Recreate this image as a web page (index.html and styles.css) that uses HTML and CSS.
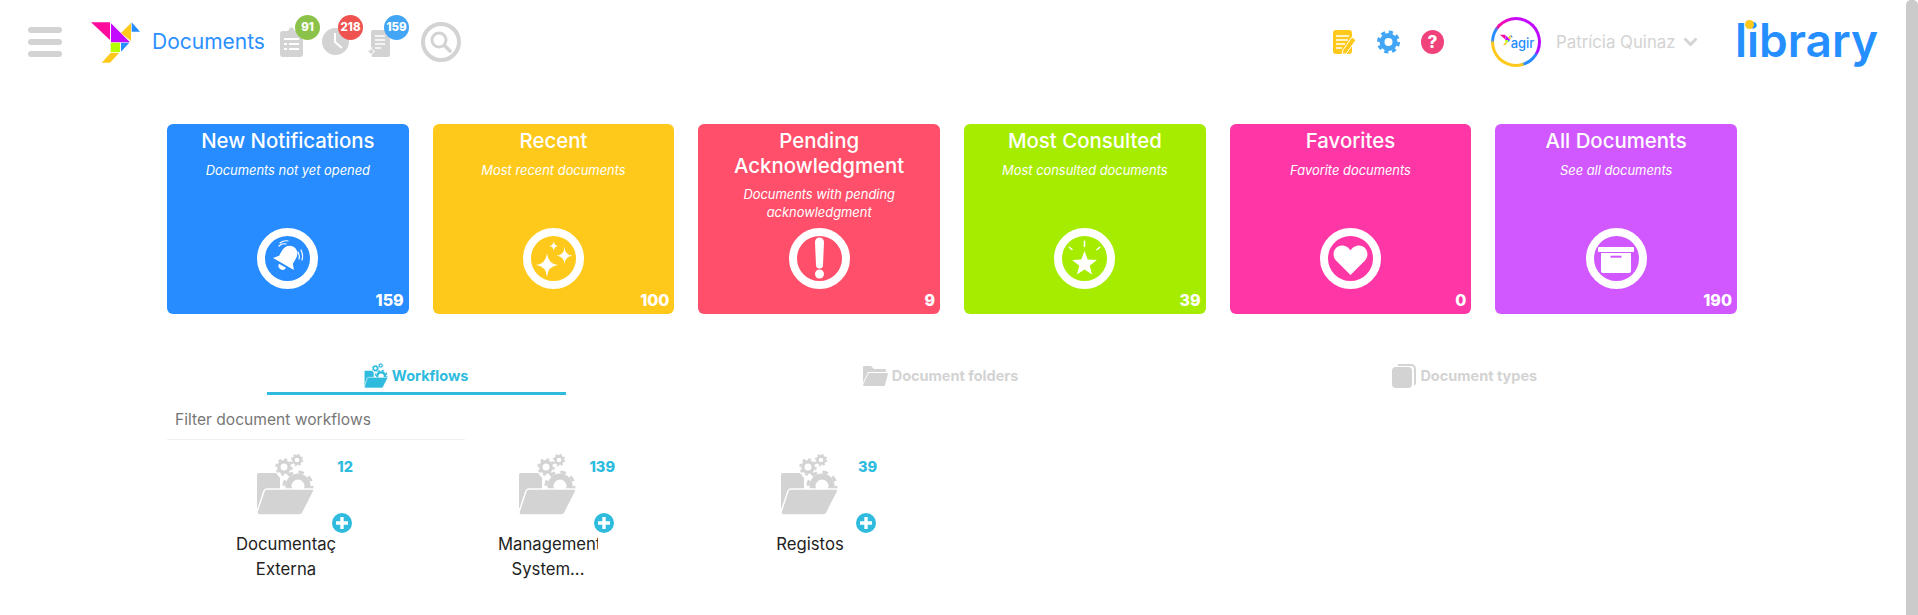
FILE: index.html
```html
<!DOCTYPE html>
<html lang="en">

<head>
    <title>Documents</title>

    <link rel="stylesheet" href="styles.css">
</head>

<body>
    <svg class="sprites">
        <symbol id="bird" viewBox="0 0 49 41">
            <polygon fill="#ff0a9c" points="0,0.3 19,0.3 19,18" />
            <polygon fill="#c30aff" points="20,1.3 20,20.3 39,20.3" />
            <polygon fill="#ffc91c" points="40,1 40,19 30,11" />
            <polygon fill="#268cff" points="40.7,0.3 49,9.7 40.7,9.7" />
            <rect fill="#b4ff00" x="19.7" y="20.7" width="9.3" height="9.3" />
            <polygon fill="#268cff" points="30,20.7 38.3,20.7 30,29.7" />
            <polygon fill="#ffc91c" points="19.7,30.7 28.3,30.7 19,40.7 10.7,40.7" />
        </symbol>
        <symbol id="gear-folder" viewBox="0 0 57 61">
            <path d="M2 19h17l4 5v30H0V21a2 2 0 0 1 2-2z" />
            <circle cx="41" cy="32" r="9.5" fill="none" stroke="currentColor" stroke-width="6" />
            <circle cx="41" cy="32" r="14" fill="none" stroke="currentColor" stroke-width="3" stroke-dasharray="5.5 5.5" />
            <circle cx="27" cy="13" r="5.2" fill="none" stroke="currentColor" stroke-width="3.4" />
            <circle cx="27" cy="13" r="7.7" fill="none" stroke="currentColor" stroke-width="2" stroke-dasharray="3 3.05" />
            <circle cx="40" cy="6" r="3.6" fill="none" stroke="currentColor" stroke-width="2.6" />
            <circle cx="40" cy="6" r="5.4" fill="none" stroke="currentColor" stroke-width="1.6" stroke-dasharray="2.1 2.14" />
            <path d="M10 35h45c1.500 0 2.200 1 1.700 2.300L46 58.500c-.7 1.500-1.500 2.500-3.500 2.500H3c-2 0-3.300-1-3-3l7-21c.5-1.500 1.500-2 3-2z" stroke="#fff" stroke-width="1.500" />
        </symbol>
    </svg>

    <div class="app">
        <div class="page">
            <header class="topbar">
                <div class="burger"><span></span><span></span><span></span></div>
                <svg class="logo"><use href="#bird" /></svg>
                <p class="app-name">Documents</p>

                <div class="counter counter-tasks">
                    <svg width="23" height="30" viewBox="0 0 23 30">
                        <path fill="#d3d3d3" d="M3 4h5l2-3a2 2 0 0 1 3 0l2 3h5a3 3 0 0 1 3 3v20a3 3 0 0 1-3 3H3a3 3 0 0 1-3-3V7a3 3 0 0 1 3-3z" />
                        <path stroke="#fff" stroke-width="2" d="M4 12h15M4 17h3M9 17h10M4 22h3M9 22h10" />
                    </svg>
                    <span class="badge badge-green">91</span>
                </div>
                <div class="counter counter-recent">
                    <svg width="27" height="27" viewBox="0 0 27 27">
                        <circle cx="13.500" cy="13.500" r="13.500" fill="#d3d3d3" />
                        <path stroke="#fff" stroke-width="2" fill="none" d="M13 5v9l7 6" />
                    </svg>
                    <span class="badge badge-red">218</span>
                </div>
                <div class="counter counter-docs">
                    <svg width="23" height="27" viewBox="0 0 23 27">
                        <path fill="#d3d3d3" d="M6 0h15a2 2 0 0 1 2 2v23a2 2 0 0 1-2 2H6a2 2 0 0 1-2-2V2a2 2 0 0 1 2-2z" />
                        <path stroke="#fff" stroke-width="1.500" d="M8 6h10M8 10h10M8 14h10M8 18h6" />
                        <path fill="#d3d3d3" stroke="#fff" d="M4 17q.5 4 4 4.500q-3.500 .5-4 4.500q-.5-4-4-4.500q3.500-.5 4-4.500z" />
                    </svg>
                    <span class="badge badge-blue">159</span>
                </div>
                <div class="search">
                    <svg width="22" height="22" viewBox="0 0 22 22" fill="none" stroke="#d3d3d3">
                        <circle cx="9" cy="9" r="7" stroke-width="3" />
                        <path stroke-width="3.500" stroke-linecap="round" d="M14.500 14.500L20 20" />
                    </svg>
                </div>

                <div class="topbar-right">
                    <svg class="tool" width="23" height="24" viewBox="0 0 23 24">
                        <rect width="19" height="24" rx="3" fill="#ffc91c" />
                        <path stroke="#fff" stroke-width="1.500" d="M3 6h13M3 10h12M3 14h9M3 18h6" />
                        <path fill="#ffc91c" stroke="#fff" d="M19 7l4 3L13 24l-4 0 1-4z" />
                    </svg>
                    <svg class="tool" width="23" height="24" viewBox="0 0 23 24">
                        <circle cx="11.500" cy="12" r="6.500" fill="none" stroke="#42a5f5" stroke-width="5" />
                        <circle cx="11.500" cy="12" r="10" fill="none" stroke="#42a5f5" stroke-width="3" stroke-dasharray="4.200 3.650" />
                    </svg>
                    <span class="tool help">?</span>

                    <div class="avatar">
                        <div class="avatar-inner">
                            <svg class="avatar-bird"><use href="#bird" /></svg>
                            <span>agir</span>
                        </div>
                    </div>
                    <p class="user-name">Patrícia Quinaz</p>
                    <svg class="chevron" width="15" height="10" viewBox="0 0 15 10">
                        <path d="M1.500 1.500L7.500 7.500L13.500 1.500" fill="none" stroke="#d3d3d3" stroke-width="2.800" />
                    </svg>
                    <div class="brand">library<i class="brand-dot"></i></div>
                </div>
            </header>

            <main>
                <section class="cards">
                    <a class="card card-blue">
                        <h2>New Notifications</h2>
                        <p>Documents not yet opened</p>
                        <div class="ring">
                            <svg viewBox="0 0 45 45" width="45" height="45">
                                <g transform="rotate(30 22 22)" fill="#fff">
                                    <path d="M22 9c-5 0-8 4-8 9v6l-4 5h24l-4-5v-6c0-5-3-9-8-9z" />
                                    <path d="M18 31a4 4 0 0 0 8 0z" />
                                </g>
                                <path fill="none" stroke="#fff" stroke-width="1.200" stroke-linecap="round" d="M14 10q3-3 7-2M15 7q4-3 8-2M33 16q2 4 1 7M36 14q2.500 5 1 10" />
                            </svg>
                        </div>
                        <div class="card-count">159</div>
                    </a>
                    <a class="card card-yellow">
                        <h2>Recent</h2>
                        <p>Most recent documents</p>
                        <div class="ring">
                            <svg viewBox="0 0 45 45" width="45" height="45" fill="#fff">
                                <path d="M16 17Q17 28 27 29Q17 30 16 41Q15 30 5 29Q15 28 16 17z" />
                                <path d="M33.500 11Q34 19 41.500 19.700Q34 20.500 33.500 28Q33 20.500 25.500 19.700Q33 19 33.500 11z" />
                                <path d="M22.700 5Q23 9.500 27.200 10Q23 10.500 22.700 15Q22.400 10.500 18.200 10Q22.400 9.500 22.700 5z" />
                            </svg>
                        </div>
                        <div class="card-count">100</div>
                    </a>
                    <a class="card card-red">
                        <h2>Pending Acknowledgment</h2>
                        <p>Documents with pending acknowledgment</p>
                        <div class="ring">
                            <svg viewBox="0 0 45 45" width="45" height="45" fill="#fff">
                                <path d="M18 6a4.500 4.500 0 0 1 9 0l-1 23a3.500 3.500 0 0 1-7 0z" />
                                <circle cx="22.500" cy="38" r="4.500" />
                            </svg>
                        </div>
                        <div class="card-count">9</div>
                    </a>
                    <a class="card card-green">
                        <h2>Most Consulted</h2>
                        <p>Most consulted documents</p>
                        <div class="ring">
                            <svg viewBox="0 0 45 45" width="45" height="45" fill="#fff">
                                <polygon points="22.500,15 25.700,23.550 34.900,24 27.700,29.700 30.100,38.500 22.500,33.500 14.900,38.500 17.300,29.700 10.100,24 19.300,23.550" />
                                <path stroke="#fff" stroke-width="1.500" d="M22.500 4.500v6.500M10.500 14l-3.500-3M34.500 14l3.500-3" />
                            </svg>
                        </div>
                        <div class="card-count">39</div>
                    </a>
                    <a class="card card-pink">
                        <h2>Favorites</h2>
                        <p>Favorite documents</p>
                        <div class="ring">
                            <svg viewBox="0 0 45 45" width="45" height="45" fill="#fff">
                                <path d="M22.500 39L8 24.500C2.500 18 7 9.500 14 9.500C18 9.500 21 12 22.500 14.500C24 12 27 9.500 31 9.500C38 9.500 42.500 18 37 24.500z" />
                            </svg>
                        </div>
                        <div class="card-count">0</div>
                    </a>
                    <a class="card card-purple">
                        <h2>All Documents</h2>
                        <p>See all documents</p>
                        <div class="ring">
                            <svg viewBox="0 0 45 45" width="45" height="45" fill="#fff">
                                <rect x="4" y="11" width="36" height="5" rx="1" />
                                <path d="M7 17h30v18a2 2 0 0 1-2 2H9a2 2 0 0 1-2-2z" />
                                <rect x="16.500" y="19.700" width="11" height="2" fill="#d157ff" />
                            </svg>
                        </div>
                        <div class="card-count">190</div>
                    </a>
                </section>

                <nav class="tabs">
                    <div class="tab active">
                        <a class="tab-link">
                            <svg class="tab-icon" width="24" height="25" viewBox="0 0 57 61"><use href="#gear-folder" /></svg>
                            Workflows
                        </a>
                    </div>
                    <div class="tab">
                        <a class="tab-link">
                            <svg class="tab-icon" width="25" height="20" viewBox="0 0 25 20">
                                <path d="M1 0h7l3 3h11a1 1 0 0 1 1 1v2H5L0 17V1a1 1 0 0 1 1-1z" />
                                <path d="M6 7h18a1 1 0 0 1 1 1l-3 11a1 1 0 0 1-1 1H1a1 1 0 0 1-1-1l5-11a1 1 0 0 1 1-1z" />
                            </svg>
                            Document folders
                        </a>
                    </div>
                    <div class="tab">
                        <a class="tab-link">
                            <svg class="tab-icon" width="24" height="24" viewBox="0 0 24 24">
                                <rect y="3" width="20" height="21" rx="4" />
                                <path d="M6 0h13a5 5 0 0 1 5 5v14a4 4 0 0 1-2 3V5a3 3 0 0 0-3-3H6z" />
                            </svg>
                            Document types
                        </a>
                    </div>
                </nav>

                <input class="filter" type="text" placeholder="Filter document workflows">

                <section class="workflows">
                    <div class="workflow">
                        <div class="workflow-box">
                            <svg class="folder"><use href="#gear-folder" /></svg>
                            <span class="workflow-count">12</span>
                            <svg class="plus" width="20" height="20" viewBox="0 0 20 20">
                                <circle cx="10" cy="10" r="10" fill="#2ebbde" />
                                <path stroke="#fff" stroke-width="3.400" d="M10 4v12M4 10h12" />
                            </svg>
                            <p class="workflow-name">Documentação Externa</p>
                        </div>
                    </div>
                    <div class="workflow">
                        <div class="workflow-box">
                            <svg class="folder"><use href="#gear-folder" /></svg>
                            <span class="workflow-count">139</span>
                            <svg class="plus" width="20" height="20" viewBox="0 0 20 20">
                                <circle cx="10" cy="10" r="10" fill="#2ebbde" />
                                <path stroke="#fff" stroke-width="3.400" d="M10 4v12M4 10h12" />
                            </svg>
                            <p class="workflow-name">Management System...</p>
                        </div>
                    </div>
                    <div class="workflow">
                        <div class="workflow-box">
                            <svg class="folder"><use href="#gear-folder" /></svg>
                            <span class="workflow-count">39</span>
                            <svg class="plus" width="20" height="20" viewBox="0 0 20 20">
                                <circle cx="10" cy="10" r="10" fill="#2ebbde" />
                                <path stroke="#fff" stroke-width="3.400" d="M10 4v12M4 10h12" />
                            </svg>
                            <p class="workflow-name">Registos</p>
                        </div>
                    </div>
                </section>
            </main>
        </div>
        <div class="scrollbar"></div>
    </div>
</body>

</html>
```

FILE: styles.css
```css
* {
    padding: 0;
    margin: 0;
    box-sizing: border-box;
    font-family: Inter, "Open Sans", Arial, sans-serif;
}

body {
    overflow: hidden;
    background-color: #fff;
}

.sprites {
    display: none;
}

.app {
    display: flex;
    height: 100vh;
}

.page {
    flex: 1;
    min-width: 0;
}

.scrollbar {
    width: 12px;
    background-color: #cbcbcb;
    border-radius: 5px 5px 0 0;
}

/* top bar */

.topbar {
    display: flex;
    align-items: center;
    height: 84px;
    padding: 0 27px 0 28px;
}

.burger {
    display: flex;
    flex-direction: column;
    gap: 6px;
    width: 34px;
    margin-right: 29px;
}

.burger span {
    height: 6px;
    background-color: #d3d3d3;
    border-radius: 3px;
}

.logo {
    width: 49px;
    height: 41px;
}

.app-name {
    width: 128px;
    margin-left: 12px;
    margin-bottom: 2px;
    font-size: 21px;
    color: #2b8fff;
}

.counter {
    position: relative;
    display: flex;
    height: 30px;
}

.counter-tasks {
    width: 42px;
}

.counter-recent {
    width: 45px;
    padding-top: 1px;
}

.counter-docs {
    width: 54px;
    padding-top: 3px;
}

.badge {
    position: absolute;
    top: -12px;
    width: 25px;
    height: 25px;
    border-radius: 50%;
    color: #fff;
    font-size: 11.500px;
    font-weight: 800;
    line-height: 25px;
    text-align: center;
}

.badge-green {
    left: 15px;
    background-color: #8bc34a;
}

.badge-red {
    left: 16px;
    background-color: #ef5350;
}

.badge-blue {
    left: 17px;
    background-color: #42a5f5;
}

.search {
    display: flex;
    align-items: center;
    justify-content: center;
    width: 40px;
    height: 40px;
    border: 4px solid #d3d3d3;
    border-radius: 50%;
}

.topbar-right {
    display: flex;
    align-items: center;
    margin-left: auto;
}

.tool {
    margin-right: 21px;
}

.help {
    display: block;
    width: 23px;
    height: 24px;
    margin-right: 47px;
    border-radius: 50%;
    background-color: #f0437c;
    color: #fff;
    font-size: 17px;
    font-weight: 800;
    line-height: 24px;
    text-align: center;
}

.avatar {
    width: 50px;
    height: 50px;
    padding: 3px;
    border-radius: 50%;
    background: conic-gradient(#c80aff 0deg, #b30aff 115deg, #268cff 125deg, #268cff 158deg, #ffc91c 165deg, #ffc91c 268deg, #268cff 275deg, #268cff 300deg, #ff0a9c 312deg, #c80aff 360deg);
}

.avatar-inner {
    display: flex;
    align-items: center;
    justify-content: center;
    height: 100%;
    padding: 2px 0 0 2px;
    border-radius: 50%;
    background-color: #fff;
    color: #268cff;
    font-size: 13px;
    font-weight: 500;
}

.avatar-bird {
    width: 13px;
    height: 12px;
    margin-top: -6px;
    margin-right: -2px;
}

.user-name {
    width: 127px;
    margin-left: 15px;
    color: #d3d3d3;
    font-size: 16.800px;
}

.brand {
    position: relative;
    width: 144px;
    margin-top: -4px;
    margin-left: 37px;
    color: #268fff;
    font-size: 46px;
    font-weight: 600;
    line-height: 42px;
    white-space: nowrap;
}

.brand-dot {
    position: absolute;
    top: 1px;
    left: 10px;
    width: 9px;
    height: 9px;
    border-radius: 50%;
    background-color: #ffc91c;
}

/* summary cards */

.cards {
    display: grid;
    grid-template-columns: repeat(6, 1fr);
    gap: 24px;
    height: 190px;
    margin: 40px 169px 0 167px;
}

.card {
    display: flex;
    flex-direction: column;
    align-items: center;
    padding-top: 5px;
    border-radius: 6px;
    color: #fff;
    text-align: center;
}

.card h2 {
    padding: 0 30px;
    font-size: 20.400px;
    font-weight: 500;
    line-height: 24.500px;
}

.card p {
    padding: 0 30px;
    margin-top: 8px;
    font-size: 12.900px;
    font-style: italic;
    line-height: 18px;
}

.ring {
    display: flex;
    flex-shrink: 0;
    align-items: center;
    justify-content: center;
    width: 61px;
    height: 61px;
    margin-top: auto;
    border: 8px solid #fff;
    border-radius: 50%;
}

.card-count {
    align-self: flex-end;
    height: 25px;
    padding-right: 5px;
    font-size: 16px;
    font-weight: 800;
    line-height: 23px;
}

.card-blue {
    background-color: #268cff;
}

.card-yellow {
    background-color: #ffc91c;
}

.card-red {
    background-color: #ff4f6a;
}

.card-green {
    background-color: #a6ec00;
}

.card-pink {
    background-color: #ff37a6;
}

.card-purple {
    background-color: #d157ff;
}

/* tabs */

.tabs {
    display: grid;
    grid-template-columns: repeat(3, 1fr);
    margin: 44px 179px 0 154px;
}

.tab {
    display: flex;
    justify-content: center;
}

.tab-link {
    display: flex;
    align-items: center;
    justify-content: center;
    gap: 4px;
    width: 299px;
    height: 37px;
    padding-top: 1px;
    border-bottom: 3px solid transparent;
    color: #d3d3d3;
    font-size: 14.500px;
    font-weight: 700;
}

.tab-icon {
    fill: #d3d3d3;
}

.tab.active .tab-link {
    border-bottom-color: #2ebbde;
    color: #2ebbde;
}

.tab.active .tab-icon {
    fill: #2ebbde;
    color: #2ebbde;
}

/* filter */

.filter {
    display: block;
    width: 298px;
    height: 41px;
    margin: 4px 0 0 167px;
    padding-left: 8px;
    border: none;
    border-bottom: 1px solid #f0f0f0;
    font-size: 15.600px;
    outline: none;
}

.filter::placeholder {
    color: #777;
}

/* workflow list */

.workflows {
    display: flex;
    margin: 14px 0 0 167px;
}

.workflow {
    width: 262px;
    padding-left: 69px;
}

.workflow-box {
    position: relative;
    width: 117px;
}

.folder {
    display: block;
    width: 57px;
    height: 61px;
    margin-left: 21px;
    fill: #d3d3d3;
    color: #d3d3d3;
}

.workflow-count {
    position: absolute;
    top: 4px;
    right: 0;
    color: #2ebbde;
    font-size: 14.500px;
    font-weight: 800;
}

.plus {
    position: absolute;
    top: 59px;
    right: 1px;
}

.workflow-name {
    width: 100px;
    height: 50px;
    margin-top: 17px;
    overflow: hidden;
    color: #222;
    font-size: 16.700px;
    line-height: 25px;
    text-align: center;
}
```
